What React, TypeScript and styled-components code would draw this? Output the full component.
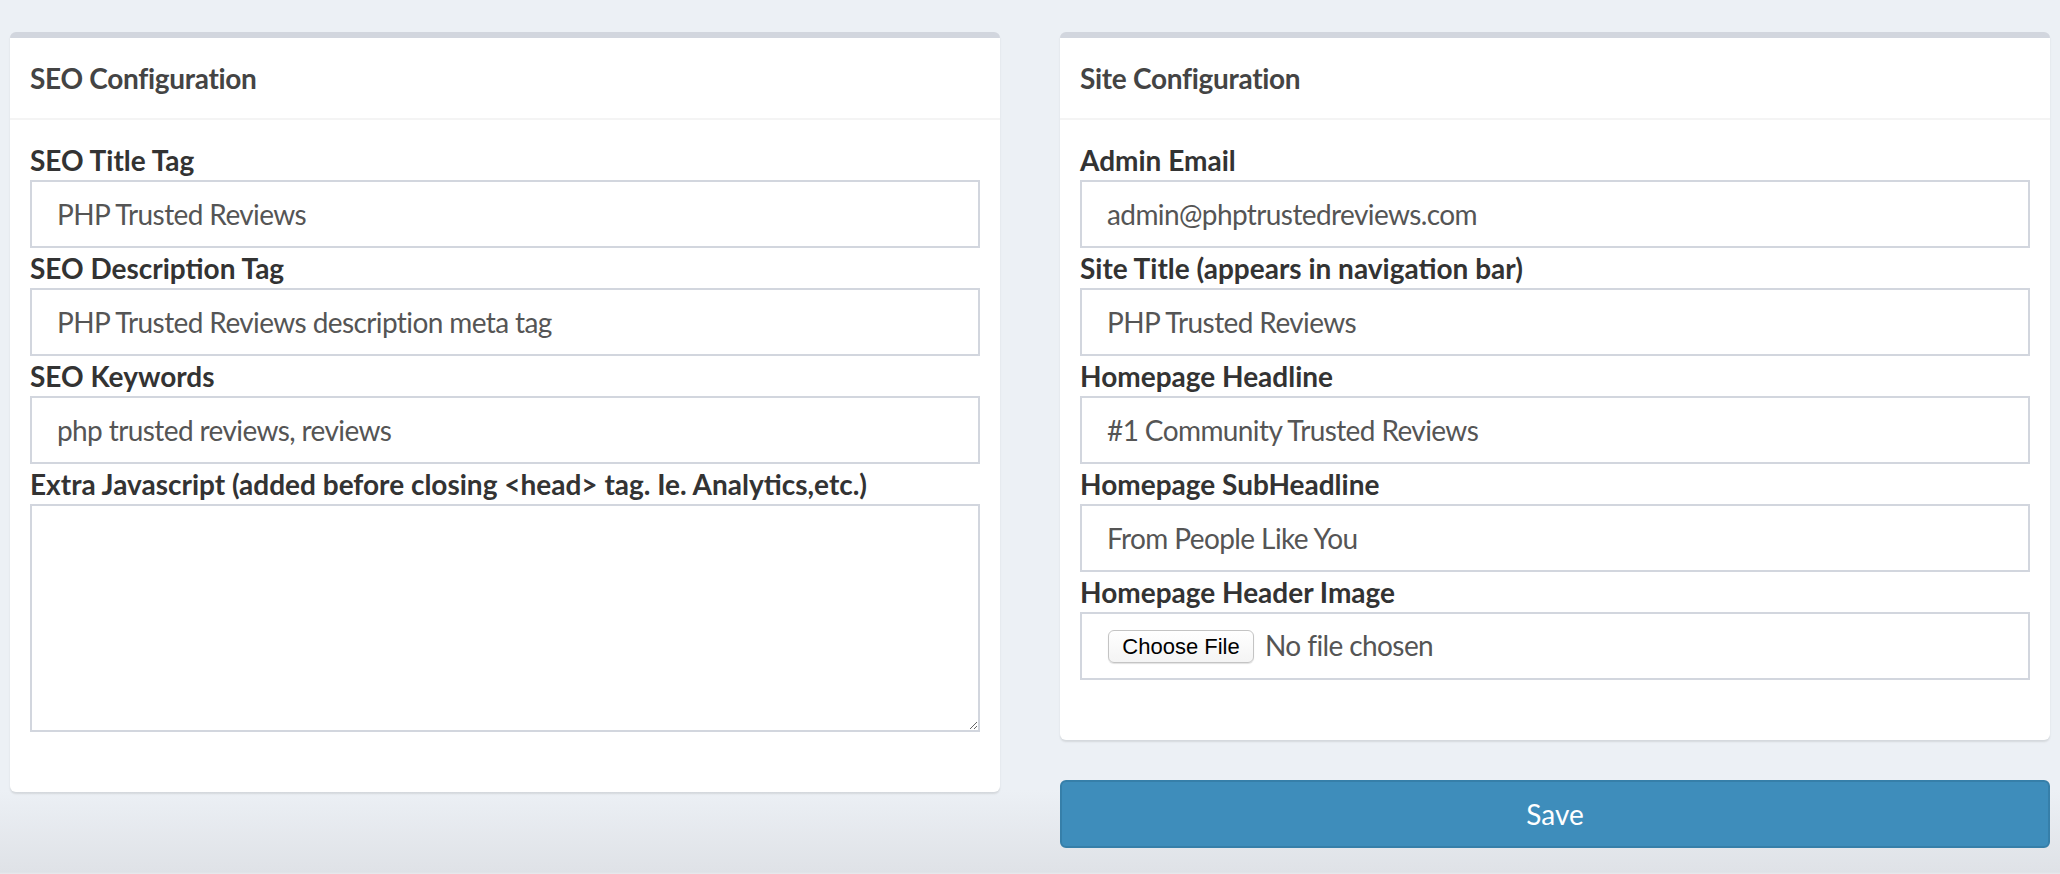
import React from 'react';
import styled, { createGlobalStyle } from 'styled-components';

const GlobalStyle = createGlobalStyle`
  html, body {
    margin: 0;
    padding: 0;
  }

  body {
    min-height: 874px;
    background: linear-gradient(180deg, #ecf0f5 0px, #ecf0f5 790px, #dfe2e7 872px, #e8eaee 874px);
    font-family: 'Lato', 'Open Sans', sans-serif;
  }

  * {
    box-sizing: border-box;
  }
`;

const Page = styled.div`
  display: grid;
  grid-template-columns: 1fr 1fr;
  column-gap: 60px;
  align-items: start;
  padding: 32px 10px 0;
`;

const Column = styled.div`
  display: flex;
  flex-direction: column;
  gap: 40px;
`;

const Box = styled.section`
  background: #fff;
  border-top: 6px solid #d2d6de;
  border-radius: 6px;
  box-shadow: 0 2px 2px rgba(0, 0, 0, 0.1);
`;

const BoxHeader = styled.div`
  padding: 20px;
  border-bottom: 2px solid #f4f4f4;
`;

const BoxTitle = styled.h3`
  margin: 0;
  font-size: 28px;
  line-height: 40px;
  font-weight: 700;
  letter-spacing: -0.3px;
  color: #444;
`;

const BoxBody = styled.div`
  padding: 20px 20px 60px;
`;

const Label = styled.label`
  display: block;
  font-size: 28px;
  line-height: 40px;
  font-weight: 700;
  color: #333;
`;

const TextInput = styled.input`
  display: block;
  width: 100%;
  height: 68px;
  padding: 0 25px;
  border: 2px solid #d2d6de;
  border-radius: 0;
  background: #fff;
  font-family: inherit;
  font-size: 28px;
  letter-spacing: -0.6px;
  color: #555;
  outline: none;
`;

const TextArea = styled.textarea`
  display: block;
  width: 100%;
  height: 228px;
  padding: 12px 25px;
  border: 2px solid #d2d6de;
  border-radius: 0;
  font-family: inherit;
  font-size: 28px;
  color: #555;
  outline: none;
`;

const FileBox = styled.label`
  display: flex;
  align-items: flex-start;
  gap: 11px;
  height: 68px;
  padding: 16px 26px 0;
  border: 2px solid #d2d6de;
  background: #fff;
  cursor: pointer;

  input {
    display: none;
  }
`;

const FileButton = styled.span`
  display: inline-flex;
  align-items: center;
  justify-content: center;
  width: 146px;
  height: 33px;
  border: 1px solid #c4c4c4;
  border-radius: 6px;
  background: linear-gradient(180deg, #ffffff 0%, #f4f4f4 100%);
  box-shadow: 0 1px 1px rgba(0, 0, 0, 0.12);
  font-family: 'Liberation Sans', Arial, sans-serif;
  font-size: 22px;
  color: #000;
`;

const FileName = styled.span`
  font-size: 28px;
  line-height: 30px;
  letter-spacing: -0.6px;
  color: #555;
`;

const SaveButton = styled.button`
  width: 100%;
  height: 68px;
  border: 2px solid #367fa9;
  border-radius: 6px;
  background: #3e8dbb;
  color: #fff;
  font-family: inherit;
  font-size: 28px;
  cursor: pointer;
`;

type Field = { label: string; value: string };

const seoFields: Field[] = [
  { label: 'SEO Title Tag', value: 'PHP Trusted Reviews' },
  { label: 'SEO Description Tag', value: 'PHP Trusted Reviews description meta tag' },
  { label: 'SEO Keywords', value: 'php trusted reviews, reviews' },
];

const siteFields: Field[] = [
  { label: 'Admin Email', value: 'admin@phptrustedreviews.com' },
  { label: 'Site Title (appears in navigation bar)', value: 'PHP Trusted Reviews' },
  { label: 'Homepage Headline', value: '#1 Community Trusted Reviews' },
  { label: 'Homepage SubHeadline', value: 'From People Like You' },
];

const App: React.FC = () => {
  return (
    <>
      <GlobalStyle />
      <Page>
        <Column>
          <Box>
            <BoxHeader>
              <BoxTitle>SEO Configuration</BoxTitle>
            </BoxHeader>
            <BoxBody>
              {seoFields.map(f => (
                <div key={f.label}>
                  <Label>{f.label}</Label>
                  <TextInput type="text" defaultValue={f.value} />
                </div>
              ))}
              <Label>Extra Javascript (added before closing &lt;head&gt; tag. Ie. Analytics,etc.)</Label>
              <TextArea />
            </BoxBody>
          </Box>
        </Column>

        <Column>
          <Box>
            <BoxHeader>
              <BoxTitle>Site Configuration</BoxTitle>
            </BoxHeader>
            <BoxBody>
              {siteFields.map(f => (
                <div key={f.label}>
                  <Label>{f.label}</Label>
                  <TextInput type="text" defaultValue={f.value} />
                </div>
              ))}
              <Label>Homepage Header Image</Label>
              <FileBox>
                <input type="file" />
                <FileButton>Choose File</FileButton>
                <FileName>No file chosen</FileName>
              </FileBox>
            </BoxBody>
          </Box>
          <SaveButton type="button">Save</SaveButton>
        </Column>
      </Page>
    </>
  );
};

export default App;
